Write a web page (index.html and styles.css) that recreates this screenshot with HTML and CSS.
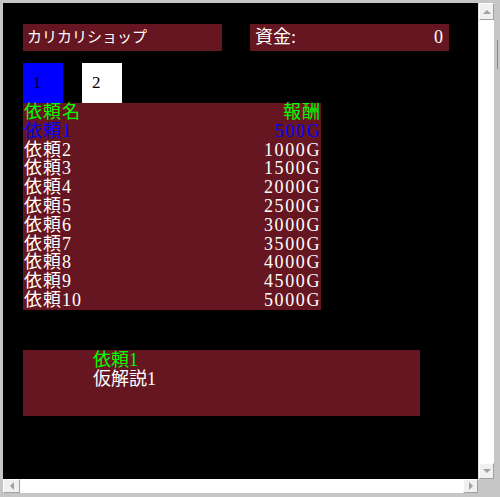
FILE: index.html
```html
<!DOCTYPE html>
<html lang="ja">
<head>
<meta charset="utf-8">
<title>カリカリショップ</title>
<link rel="stylesheet" href="styles.css">
</head>
<body>
<div class="window">
  <div class="viewport">
    <div class="header">
      <div class="title">カリカリショップ</div>
      <div class="funds"><span>資金:</span><span>0</span></div>
    </div>
    <div class="tabs">
      <div class="tab active">1</div>
      <div class="tab">2</div>
    </div>
    <div class="table">
      <div class="row head"><span>依頼名</span><span>報酬</span></div>
      <div class="row selected"><span>依頼1</span><span class="reward">500G</span></div>
      <div class="row"><span>依頼2</span><span class="reward">1000G</span></div>
      <div class="row"><span>依頼3</span><span class="reward">1500G</span></div>
      <div class="row"><span>依頼4</span><span class="reward">2000G</span></div>
      <div class="row"><span>依頼5</span><span class="reward">2500G</span></div>
      <div class="row"><span>依頼6</span><span class="reward">3000G</span></div>
      <div class="row"><span>依頼7</span><span class="reward">3500G</span></div>
      <div class="row"><span>依頼8</span><span class="reward">4000G</span></div>
      <div class="row"><span>依頼9</span><span class="reward">4500G</span></div>
      <div class="row"><span>依頼10</span><span class="reward">5000G</span></div>
    </div>
    <div class="desc">
      <div class="desc-title">依頼1</div>
      <div class="desc-text">仮解説1</div>
    </div>
  </div>
  <div class="vscroll">
    <div class="btn up"><span class="arrow arrow-up"></span></div>
    <div class="btn down"><span class="arrow arrow-down"></span></div>
  </div>
  <div class="hscroll">
    <div class="btn left"><span class="arrow arrow-left"></span></div>
    <div class="btn right"><span class="arrow arrow-right"></span></div>
  </div>
  <div class="outer-edge"><div class="outer-line"></div></div>
</div>
</body>
</html>
```

FILE: styles.css
```css
html, body {
  margin: 0;
  padding: 0;
  background: #c6c6c6;
}

.window {
  width: 500px;
  height: 497px;
  background: #c6c6c6;
  display: grid;
  grid-template-columns: 3px 475px 16px 6px;
  grid-template-rows: 3px 476px 14px 4px;
  font-family: "Liberation Serif", "Noto Sans CJK JP", serif;
}

.viewport {
  grid-area: 2 / 2 / 3 / 3;
  background: #000;
  overflow: hidden;
  box-sizing: border-box;
  padding: 21px 0 0 20px;
  display: flex;
  flex-direction: column;
  align-items: flex-start;
}

.header {
  display: flex;
  gap: 28px;
}

.title,
.funds {
  width: 199px;
  height: 27px;
  box-sizing: border-box;
  background: #661620;
  color: #fff;
  line-height: 27px;
}

.title {
  font-size: 15px;
  padding-left: 4px;
}

.funds {
  font-size: 18px;
  display: flex;
  justify-content: space-between;
  padding: 0 6px 0 5px;
}

.tabs {
  margin-top: 12px;
  display: flex;
  gap: 19px;
}

.tab {
  width: 40px;
  height: 40px;
  box-sizing: border-box;
  padding-left: 10px;
  background: #fff;
  color: #000;
  font-size: 17px;
  line-height: 40px;
}

.tab.active {
  background: #0000ff;
}

.table {
  width: 298px;
  box-sizing: border-box;
  padding: 0 1px;
  background: #661620;
  font-size: 18px;
  line-height: 18.8px;
  color: #fff;
  letter-spacing: 1px;
}

.row {
  display: flex;
  justify-content: space-between;
}

.row span:last-child {
  margin-right: -1px;
}

.row .reward {
  letter-spacing: 1.6px;
  margin-right: -1.6px;
}

.row.head {
  color: #00ff00;
}

.row.selected {
  color: #0000ff;
}

.desc {
  margin-top: 40px;
  width: 397px;
  height: 66px;
  box-sizing: border-box;
  padding: 1px 0 0 70px;
  background: #661620;
  font-size: 18px;
  line-height: 19px;
  color: #fff;
}

.desc-title {
  color: #00ff00;
}

.vscroll {
  grid-area: 2 / 3 / 3 / 4;
  background: #fff;
  box-sizing: border-box;
  border-left: 1px solid #e2e2e2;
  display: flex;
  flex-direction: column;
  justify-content: space-between;
}

.hscroll {
  grid-area: 3 / 2 / 4 / 3;
  background: #fff;
  display: flex;
  justify-content: space-between;
}

.btn {
  box-sizing: border-box;
  background: #f0f0f0;
  border-top: 1px solid #fff;
  border-left: 1px solid #fff;
  border-right: 1px solid #a0a0a0;
  border-bottom: 1px solid #a0a0a0;
  display: flex;
  align-items: center;
  justify-content: center;
}

.btn.up {
  height: 17px;
}

.btn.down {
  height: 16px;
}

.btn.left {
  width: 17px;
}

.btn.right {
  width: 15px;
}

.arrow {
  width: 0;
  height: 0;
  display: block;
}

.arrow-up {
  border-left: 4px solid transparent;
  border-right: 4px solid transparent;
  border-bottom: 4px solid #a0a0a0;
}

.arrow-down {
  border-left: 4px solid transparent;
  border-right: 4px solid transparent;
  border-top: 4px solid #a0a0a0;
}

.arrow-left {
  border-top: 4px solid transparent;
  border-bottom: 4px solid transparent;
  border-right: 4px solid #a0a0a0;
}

.arrow-right {
  border-top: 4px solid transparent;
  border-bottom: 4px solid transparent;
  border-left: 4px solid #a0a0a0;
}

.outer-edge {
  grid-area: 1 / 4 / 5 / 5;
  padding: 40px 0 0 3px;
}

.outer-line {
  width: 1px;
  height: 29px;
  background: #8a8a8a;
}
```
